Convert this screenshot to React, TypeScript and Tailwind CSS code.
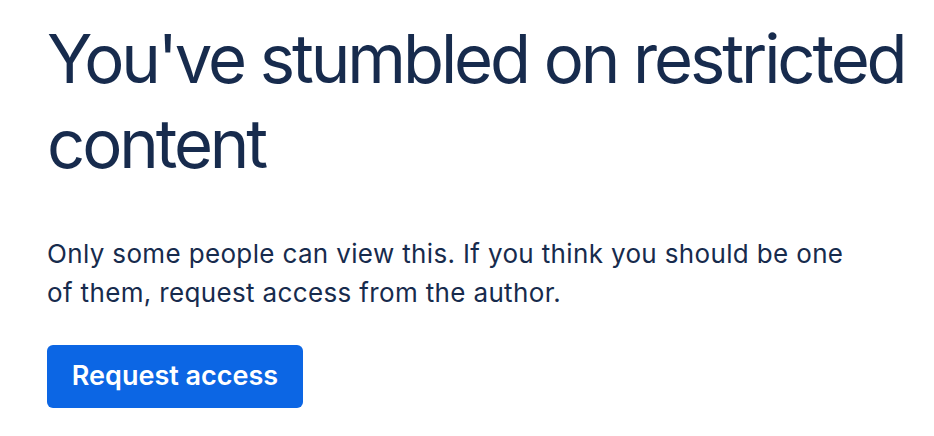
export default function App() {
  return (
    <div
      className="w-[934px] h-[436px] bg-white text-[#172B4D] pl-[47px] pt-[16px]"
      style={{ fontFamily: "Inter, 'Noto Sans', sans-serif" }}
    >
      <h1 className="text-[67px] leading-[85px] font-normal tracking-[-3.1px] w-[887px]">
        You've stumbled on restricted content
      </h1>
      <p className="mt-[48px] text-[26px] leading-[39px] tracking-[0.35px] w-[820px]">
        Only some people can view this. If you think you should be one of them, request access from the author.
      </p>
      <button className="mt-[33px] w-[256px] h-[63px] rounded-[6px] bg-[#0C66E4] text-white text-[27px] font-semibold">
        Request access
      </button>
    </div>
  );
}
